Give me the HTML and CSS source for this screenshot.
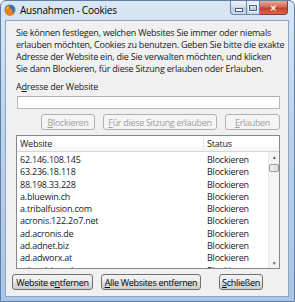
FILE: index.html
```html
<!DOCTYPE html>
<html lang="de">
<head>
    <meta charset="UTF-8">
    <title>Ausnahmen - Cookies</title>
    <link rel="stylesheet" href="styles.css">
</head>
<body>
    <div class="window">
        <div class="titlebar">
            <svg class="app-icon" width="12" height="12" viewBox="0 0 12 12">
                <circle cx="6" cy="6" r="5.5" fill="#3d6fb5"/>
                <path d="M1 7 C1 3 4 1 7 1.5 C5 2.5 5 4 6.5 4.5 C8.5 5 9 7 7.5 9 C9.5 8.5 11 7 11 5 C11.5 9 9 11.5 6 11.5 C3 11.5 1 9.5 1 7Z" fill="#e8801e"/>
                <path d="M2 5 C2.5 3 4 2 5 2 C4 3 4 4 4.5 5Z" fill="#f5b33a"/>
            </svg>
            <span class="title">Ausnahmen - Cookies</span>
            <div class="caption">
                <span class="cap-btn cap-min"><i></i></span>
                <span class="cap-btn cap-max"><i></i></span>
                <span class="cap-btn cap-close">✕</span>
            </div>
        </div>

        <div class="client">
            <p class="intro">Sie können festlegen, welchen Websites Sie immer oder niemals<br>erlauben möchten, Cookies zu benutzen. Geben Sie bitte die exakte<br>Adresse der Website ein, die Sie verwalten möchten, und klicken<br>Sie dann Blockieren, für diese Sitzung erlauben oder Erlauben.</p>

            <div class="label">A<u>d</u>resse der Website</div>
            <div class="input"></div>

            <div class="actions">
                <span class="btn disabled" style="width:54px"><u>B</u>lockieren</span>
                <span class="btn disabled" style="width:114px"><u>F</u>ür diese Sitzung erlauben</span>
                <span class="btn disabled" style="width:55px"><u>E</u>rlauben</span>
            </div>

            <div class="list">
                <div class="list-head">
                    <span class="col-site">Website</span>
                    <span class="col-status">Status</span>
                </div>
                <div class="list-body">
                    <div class="rows" id="rows"></div>
                    <div class="scrollbar">
                        <span class="arrow">▲</span>
                        <span class="thumb"></span>
                        <span class="track"></span>
                        <span class="arrow">▼</span>
                    </div>
                </div>
            </div>

            <div class="footer">
                <span class="btn" style="width:81px">Website e<u>n</u>tfernen</span>
                <span class="btn" style="width:100px"><u>A</u>lle Websites entfernen</span>
                <span class="btn close-btn" style="width:44px"><u>S</u>chließen</span>
            </div>
        </div>
    </div>

    <script>
        // Liste der Ausnahmen
        const sites = [
            '62.146.108.145',
            '63.236.18.118',
            '88.198.33.228',
            'a.bluewin.ch',
            'a.tribalfusion.com',
            'acronis.122.2o7.net',
            'ad.acronis.de',
            'ad.adnet.biz',
            'ad.adworx.at',
            'ad.ambient.de'
        ];

        const rows = document.getElementById('rows');
        sites.forEach(function(site) {
            const row = document.createElement('div');
            row.className = 'row';
            row.innerHTML = '<span class="col-site">' + site + '</span><span class="col-status">Blockieren</span>';
            rows.appendChild(row);
        });
    </script>
</body>
</html>
```

FILE: styles.css
```css
body {
    margin: 0;
    background: #ffffff;
    font-family: "Open Sans", "Noto Sans", sans-serif;
    font-size: 9px;
    letter-spacing: -0.22px;
    color: #1a1a1a;
}
u {
    text-decoration: underline;
    text-underline-offset: 1px;
}
.window {
    width: 295px;
    height: 302px;
    box-sizing: border-box;
    padding: 0 5px 4px 4px;
    background: linear-gradient(180deg, #d9e7f5 0%, #bcd3eb 40%, #a9c6e6 100%);
    border: 1px solid #5f7fa5;
    border-radius: 6px 6px 0 0;
    display: flex;
    flex-direction: column;
    overflow: hidden;
}
.titlebar {
    height: 19px;
    flex: none;
    display: flex;
    align-items: center;
    gap: 4px;
}
.app-icon {
    margin-left: -1px;
    margin-top: -2px;
}
.title {
    font-size: 10px;
    color: #000;
    margin-top: -2px;
}
.caption {
    margin-left: auto;
    align-self: flex-start;
    display: flex;
    margin-right: 1px;
}
.cap-btn {
    height: 14px;
    box-sizing: border-box;
    border: 1px solid #6d86a6;
    border-top: none;
    background: linear-gradient(180deg, #eef3f9 0%, #d3e0ee 45%, #b9cde4 55%, #c8dbef 100%);
    display: flex;
    align-items: center;
    justify-content: center;
}
.cap-min {
    width: 16px;
    border-radius: 0 0 0 4px;
    border-right: none;
}
.cap-min i {
    width: 6px;
    height: 2px;
    margin-top: 4px;
    background: #fff;
    border: 1px solid #4b5d75;
}
.cap-max {
    width: 14px;
}
.cap-max i {
    width: 6px;
    height: 4px;
    border: 1px solid #4b5d75;
    outline: 1px solid #fff;
}
.cap-close {
    width: 28px;
    border-left: none;
    border-radius: 0 0 4px 0;
    border-color: #8a3a2d;
    background: linear-gradient(180deg, #eaa99a 0%, #d46a52 45%, #c3432a 55%, #d9674c 100%);
    color: #fff;
    font-size: 8px;
    font-weight: bold;
    letter-spacing: 0;
}
.client {
    flex: 1;
    min-height: 0;
    background: #f0f0f0;
    border: 1px solid #8ba6c6;
    padding: 6px 8px 0 10px;
    display: flex;
    flex-direction: column;
}
.client > * {
    flex: none;
}
.intro {
    margin: 0;
    line-height: 12px;
    white-space: nowrap;
}
.label {
    margin-top: 6px;
    line-height: 12px;
}
.input {
    margin-top: 3px;
    margin-left: 1px;
    height: 11px;
    background: #fff;
    border: 1px solid #b5b9c0;
    border-top-color: #abadb3;
}
.actions {
    margin-top: 5px;
    display: flex;
    justify-content: flex-end;
    gap: 8px;
}
.btn {
    box-sizing: border-box;
    height: 16px;
    display: flex;
    align-items: center;
    justify-content: center;
    white-space: nowrap;
    letter-spacing: -0.3px;
    border: 1px solid #707070;
    border-radius: 3px;
    background: linear-gradient(180deg, #f2f2f2 0%, #ebebeb 48%, #dddddd 52%, #cfcfcf 100%);
    color: #000;
}
.btn.disabled {
    border-color: #adb2b5;
    background: #f4f4f4;
    color: #a0a0a0;
}
.list {
    margin-top: 5px;
    height: 132px;
    background: #fff;
    border: 1px solid #828790;
    display: flex;
    flex-direction: column;
    overflow: hidden;
}
.list-head {
    height: 15px;
    flex: none;
    display: flex;
    align-items: center;
    background: linear-gradient(180deg, #ffffff 0%, #ffffff 50%, #f3f4f6 100%);
    border-bottom: 1px solid #d5d5d5;
}
.col-site {
    width: 183px;
    padding-left: 3px;
    flex: none;
}
.col-status {
    flex: 1;
}
.list-head .col-site {
    border-right: 1px solid #e3e5e8;
    height: 15px;
    line-height: 15px;
}
.list-head .col-status {
    padding-left: 3px;
}
.list-body {
    flex: 1;
    display: flex;
    min-height: 0;
}
.rows {
    flex: 1;
    padding-top: 2px;
    overflow: hidden;
}
.row {
    display: flex;
    height: 12.3px;
    line-height: 12px;
}
.row .col-status {
    padding-left: 4px;
}
.scrollbar {
    width: 10px;
    flex: none;
    display: flex;
    flex-direction: column;
    background: #f4f4f4;
    border-left: 1px solid #ebebeb;
}
.arrow {
    height: 10px;
    font-size: 5px;
    line-height: 10px;
    text-align: center;
    color: #4d6185;
}
.thumb {
    height: 6px;
    margin: 2px 0 0;
    border: 1px solid #9a9a9a;
    border-radius: 2px;
    background: linear-gradient(90deg, #f1f1f1, #dcdcdc);
}
.track {
    flex: 1;
}
.footer {
    margin-top: 5px;
    margin-left: -4px;
    display: flex;
    gap: 8px;
}
.close-btn {
    margin-left: auto;
    margin-right: 17px;
}
```
